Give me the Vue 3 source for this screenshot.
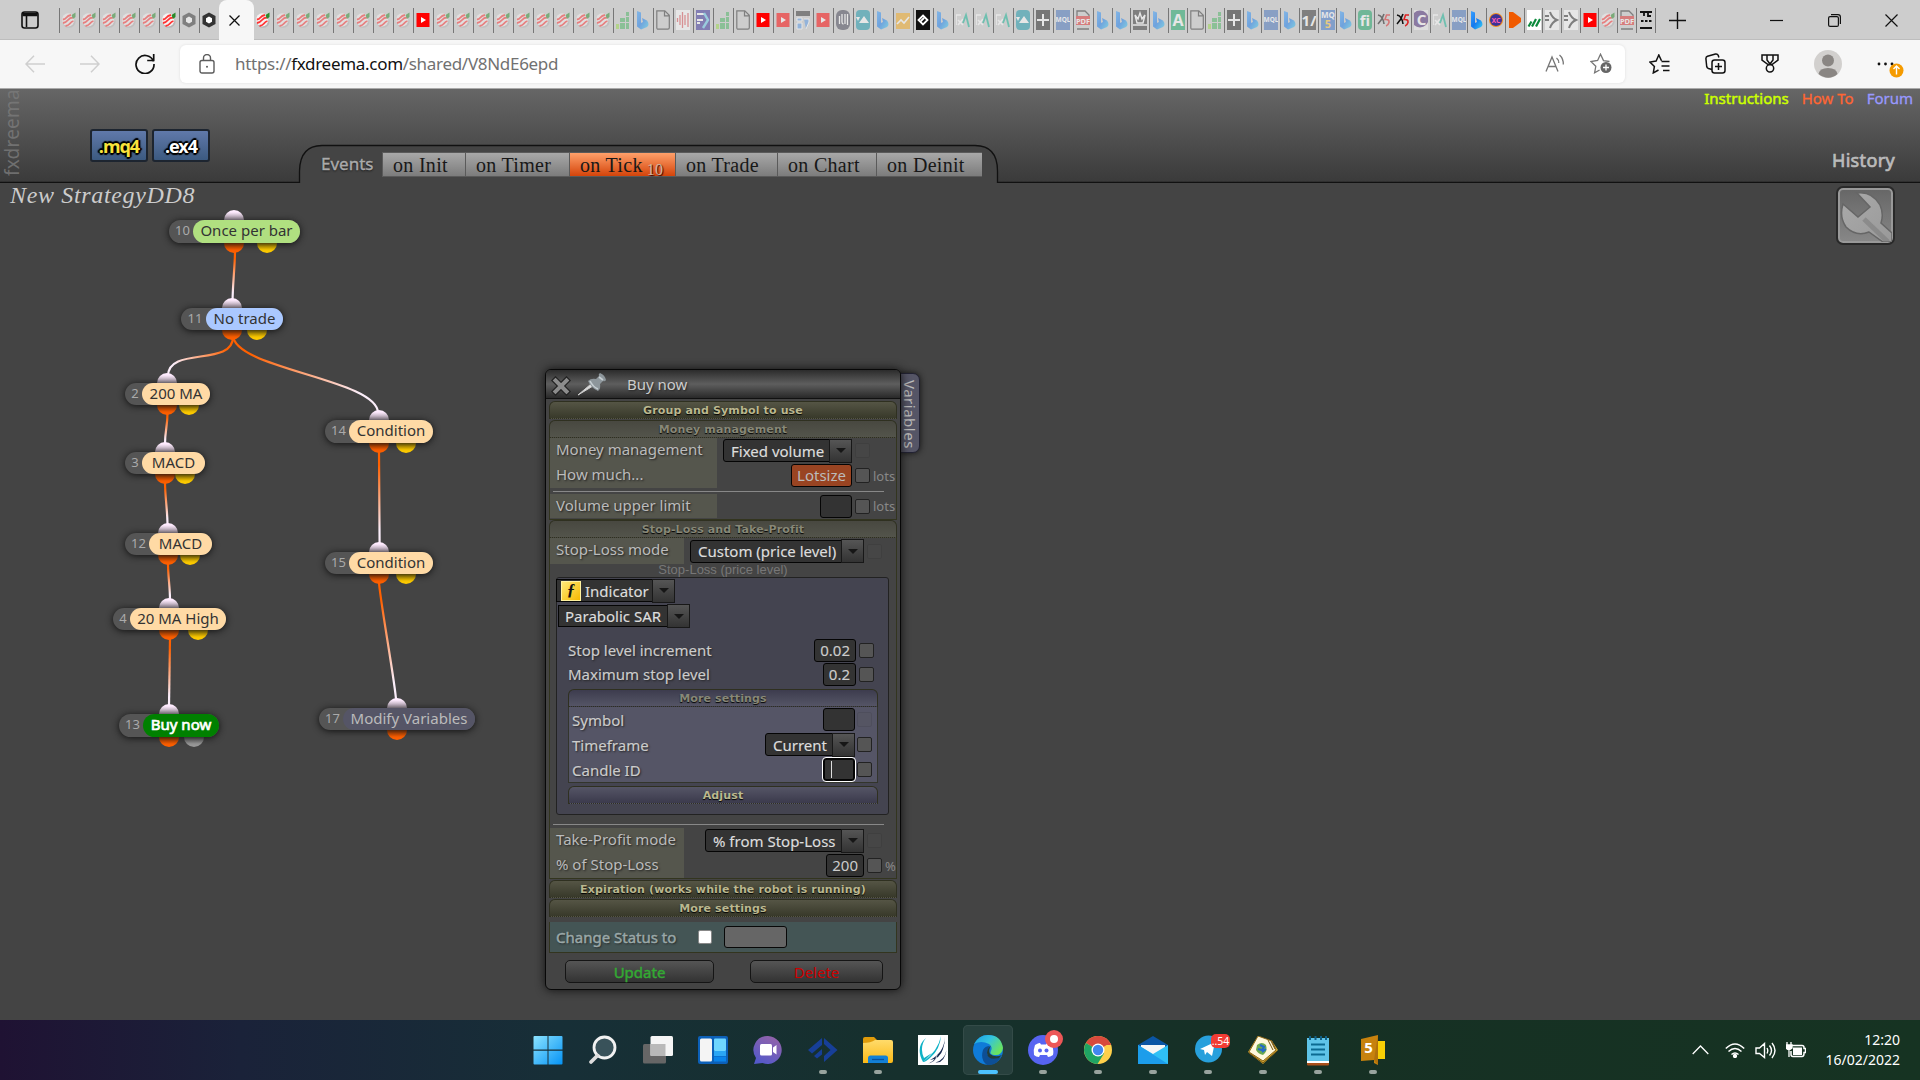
<template>
  <div class="screen">
    <!-- shared favicon shapes -->
    <svg class="defs" width="0" height="0">
      <defs>
        <linearGradient id="bing" x1="0" y1="0" x2="1" y2="1">
          <stop offset="0" stop-color="#3aa0ff" />
          <stop offset="0.5" stop-color="#1479ee" />
          <stop offset="1" stop-color="#38d0f5" />
        </linearGradient>
        <symbol id="i-fx" viewBox="0 0 14 20">
          <ellipse cx="7" cy="11.500" rx="6.600" ry="6.300" fill="#b5b5b5" />
          <ellipse cx="6.200" cy="9.800" rx="6.200" ry="6.600" fill="#f6f2f2" />
          <path d="M.8 9.500Q3 9.500 4.500 7.500T9 5M1 13q3-.5 5-3t5-2.500M3.500 16q3-.5 4.500-2.500T11.500 11" stroke="#f33" stroke-width="1.800" fill="none" />
          <path d="M9.500 5l4-2.500v4.500l-2.500 2z" fill="#2a8a2a" />
        </symbol>
        <symbol id="i-hex" viewBox="0 0 14 20">
          <path d="M7 2.500l6.500 3.500v8L7 17.500.5 14V6z" fill="#333" />
          <path d="M7 6.500l3 1.700v3.600l-3 1.700-3-1.700V8.200z" fill="#fff" />
        </symbol>
        <symbol id="i-yt" viewBox="0 0 14 20">
          <rect x="0.500" y="3" width="13" height="14" fill="#f00" />
          <path d="M5 7l5 3-5 3z" fill="#fff" />
        </symbol>
        <symbol id="i-bars" viewBox="0 0 14 20">
          <path d="M0 14h3v5H0z" fill="#9ad94a" />
          <path d="M4 8h5v4H4zM4 13h5v6H4zM10 2h3v4h-3zM10 7h3v5h-3zM10 13h3v6h-3z" fill="#4bb562" />
        </symbol>
        <symbol id="i-bing" viewBox="0 0 14 20">
          <path d="M1 1l4 1.500v10.500l2-1-1-4 5 2.500q3 4 0 6.500L5 19.500 1 16.500z" fill="url(#bing)" />
        </symbol>
        <symbol id="i-page" viewBox="0 0 14 20">
          <path d="M.8.800h8l4.500 4.500v12.500q0 1.400-1.400 1.400H2.200Q.8 19.200.8 17.800zM8.500.800v5h5" fill="none" stroke="#333" stroke-width="1.200" />
        </symbol>
        <symbol id="i-pulse" viewBox="0 0 14 20">
          <rect width="14" height="20" fill="#fff" />
          <path d="M1.500 8v4M4 5v10M6.500 2v16M9 5v10M12 3v14" stroke="#e0555a" stroke-width="1.300" />
        </symbol>
        <symbol id="i-fxp" viewBox="0 0 14 20">
          <rect width="14" height="20" fill="#3a329a" />
          <path d="M1 4h7M1 10h6M1 13h3" stroke="#fff" stroke-width="2.200" fill="none" />
          <path d="M8 3l4 7-5 8" stroke="#6ce" stroke-width="2.400" fill="none" />
        </symbol>
        <symbol id="i-b7" viewBox="0 0 14 20">
          <path d="M0 1h14v5H0z" fill="#333" />
          <path d="M1 8h5v3H1zM1 13h5v6H1zM8 9h5v3l-3 7" fill="#5a9be8" stroke="#fff" />
        </symbol>
        <symbol id="i-ill" viewBox="0 0 14 20">
          <rect width="14" height="20" rx="6" fill="#445" />
          <path d="M3.500 6v8M6 4v8q0 2 1.500 2M9 4v10M11.500 4v11" stroke="#fff" stroke-width="1.300" fill="none" />
        </symbol>
        <symbol id="i-tri" viewBox="0 0 14 20">
          <rect width="14" height="20" rx="4" fill="#1797ab" />
          <path d="M0 7h4l-2 4zM3 13l5-7 5 7z" fill="#fff" />
        </symbol>
        <symbol id="i-chart" viewBox="0 0 14 20">
          <rect y="3" width="14" height="16" fill="#f3a81c" />
          <path d="M1 14l4-4 3 3 5-6" stroke="#fff" stroke-width="1.600" fill="none" />
        </symbol>
        <symbol id="i-diamond" viewBox="0 0 14 20">
          <rect width="14" height="20" fill="#111" />
          <path d="M7 5.500l4.500 4.500L7 14.500 2.500 10zM5 11l3-3" stroke="#fff" stroke-width="1.800" fill="none" />
        </symbol>
        <symbol id="i-xa" viewBox="0 0 14 20">
          <path d="M0 5h5M0 5v10M2 10l5 5M7 9l-5 6" stroke="#fff" stroke-width="1.600" fill="none" />
          <path d="M7 13l3-8 3 12" stroke="#11b494" stroke-width="1.800" fill="none" />
        </symbol>
        <symbol id="i-plus" viewBox="0 0 14 20">
          <rect width="14" height="20" fill="#222" />
          <path d="M7 4v12M1 10h12" stroke="#fff" stroke-width="2" />
        </symbol>
        <symbol id="i-mql" viewBox="0 0 14 20">
          <rect width="14" height="20" fill="#4573bd" />
          <text x="7" y="11.500" font-size="6.500" text-anchor="middle" font-weight="bold" fill="#fff">MQL</text>
        </symbol>
        <symbol id="i-pdf" viewBox="0 0 14 20">
          <path d="M1 6V1h8l4 4v1M1 19h12" fill="none" stroke="#333" stroke-width="1.300" />
          <rect y="6" width="14" height="9" fill="#e03030" />
          <text x="7" y="13.500" font-size="7.500" text-anchor="middle" font-weight="bold" fill="#fff">PDF</text>
        </symbol>
        <symbol id="i-crown" viewBox="0 0 14 20">
          <rect width="14" height="20" fill="#333" />
          <path d="M2 5l2 8h6l2-8-3 4-2-6-2 6zM0 15h14" stroke="#fff" fill="none" stroke-width="1.400" />
        </symbol>
        <symbol id="i-a" viewBox="0 0 14 20">
          <rect width="14" height="20" fill="#16a765" />
          <text x="7" y="16" font-size="16" text-anchor="middle" font-weight="bold" fill="#fff">A</text>
        </symbol>
        <symbol id="i-one" viewBox="0 0 14 20">
          <rect width="14" height="20" fill="#333" />
          <text x="7" y="16" font-size="15" text-anchor="middle" font-weight="bold" fill="#fff">1/</text>
        </symbol>
        <symbol id="i-mq5" viewBox="0 0 14 20">
          <rect width="14" height="20" fill="#3a73c9" />
          <text x="7" y="8" font-size="8" text-anchor="middle" font-weight="bold" fill="#fff">MQ</text>
          <text x="7" y="18" font-size="11" text-anchor="middle" font-weight="bold" fill="#ffc838">5</text>
        </symbol>
        <symbol id="i-fi" viewBox="0 0 14 20">
          <rect width="14" height="20" rx="4" fill="#15a362" />
          <text x="7" y="15.500" font-size="15" text-anchor="middle" font-weight="bold" fill="#fff">fi</text>
        </symbol>
        <symbol id="i-xf" viewBox="0 0 14 20">
          <path d="M1 5q5 1 6 9M7 4q-2 6-6 10" stroke="#111" stroke-width="1.600" fill="none" />
          <path d="M13 5H9.500L8 9.500q4.500-.5 4 3-1 3-3 3.500" stroke="#d22" stroke-width="1.600" fill="none" />
        </symbol>
        <symbol id="i-c" viewBox="0 0 14 20">
          <rect width="14" height="20" fill="#eee" />
          <circle cx="6" cy="9" r="8.500" fill="#4b2a77" />
          <text x="7.500" y="14.500" font-size="15" text-anchor="middle" font-weight="bold" fill="#fff">C</text>
        </symbol>
        <symbol id="i-xc" viewBox="0 0 14 20">
          <circle cx="7" cy="10" r="7" fill="#f08a1d" />
          <circle cx="7" cy="10" r="6" fill="#3b3297" />
          <text x="7" y="12.500" font-size="7" text-anchor="middle" font-weight="bold" fill="#ff5bb0">XC</text>
        </symbol>
        <symbol id="i-play" viewBox="0 0 14 20">
          <path d="M1 2h4l8 6v4l-8 6H1z" fill="#f05a00" />
        </symbol>
        <symbol id="i-green" viewBox="0 0 14 20">
          <rect width="14" height="20" fill="#fff" />
          <path d="M1.500 16.500l3-5M5 16.500l4-7.500M9 16.500l4-7.500" stroke="#0b8a3c" stroke-width="2.200" />
        </symbol>
        <symbol id="i-fgt" viewBox="0 0 14 20">
          <rect width="14" height="20" fill="#fff" />
          <path d="M5 2q2 6 7 8-5 2-7 8M0 6h4M0 10h4" stroke="#333" stroke-width="2" fill="none" />
        </symbol>
        <symbol id="i-lines" viewBox="0 0 14 20">
          <path d="M1 2h12M5 2v4M9 2v4h3M1 18h12M2 11h2.500M6 11h2.500M10 11h2.500" stroke="#111" stroke-width="1.800" fill="none" />
        </symbol>
      </defs>
    </svg>

    <div class="tabstrip">
      <svg class="tab-menu" width="18" height="18" viewBox="0 0 18 18" fill="none" stroke="#111" stroke-width="1.600">
        <rect x="1" y="1" width="16" height="16" rx="2.500" />
        <path d="M1.500 3.500h15" stroke-width="3.500" />
        <path d="M5.500 5v11" />
      </svg>
      <div v-for="(t, i) in tabsBefore" :key="'b' + i" class="tab before" :class="{ dim: !t.lit }">
        <svg width="14" height="20"><use :href="'#i-' + t.icon" /></svg>
      </div>
      <div class="tab-active">
        <svg width="11" height="11" viewBox="0 0 11 11"><path d="M.5.500l10 10M10.500.500l-10 10" stroke="#111" stroke-width="1.300" /></svg>
      </div>
      <div v-for="(t, i) in tabsAfter" :key="'a' + i" class="tab after" :class="{ dim: !t.lit, narrow: i > 41 }">
        <svg width="14" height="20"><use :href="'#i-' + t.icon" /></svg>
      </div>
      <svg class="new-tab" width="17" height="17" viewBox="0 0 17 17"><path d="M8.500 0v17M0 8.500h17" stroke="#111" stroke-width="1.400" /></svg>
      <div class="win-buttons">
        <svg width="13" height="13" viewBox="0 0 13 13"><path d="M0 6.500h13" stroke="#111" stroke-width="1.200" /></svg>
        <svg width="13" height="13" viewBox="0 0 13 13" fill="none" stroke="#111" stroke-width="1.200"><rect x=".6" y="2.600" width="9.800" height="9.800" rx="1.500" /><path d="M3 .6h7q2.400 0 2.400 2.400v7" /></svg>
        <svg width="13" height="13" viewBox="0 0 13 13"><path d="M.5.500l12 12M12.500.500l-12 12" stroke="#111" stroke-width="1.200" /></svg>
      </div>
    </div>

    <div class="toolbar">
      <svg class="nav-back" width="20" height="18" viewBox="0 0 20 18" fill="none" stroke="#cfcfcf" stroke-width="1.500"><path d="M20 9H1M9 .8L1 9l8 8.200" /></svg>
      <svg class="nav-fwd" width="20" height="18" viewBox="0 0 20 18" fill="none" stroke="#cfcfcf" stroke-width="1.500"><path d="M0 9h19M11 .8L19 9l-8 8.200" /></svg>
      <svg class="nav-reload" width="20" height="21" viewBox="0 0 20 21" fill="none" stroke="#111" stroke-width="1.700"><path d="M18.500 8.500A9 9 0 1 0 19 11M18.700 1v6.500h-6.500" /></svg>
      <div class="address">
        <svg class="lock" width="16" height="20" viewBox="0 0 16 20" fill="none" stroke="#5c5c5c" stroke-width="1.400"><rect x="1" y="6.500" width="14" height="12.500" rx="2" /><path d="M4.500 6.500V4a3.500 3.500 0 0 1 7 0v2.500" /><circle cx="8" cy="12.700" r="1" fill="#5c5c5c" stroke="none" /></svg>
        <span class="url">https://<b>fxdreema.com</b>/shared/V8NdE6epd</span>
        <svg class="read" width="20" height="19" viewBox="0 0 20 19" fill="none" stroke="#767676" stroke-width="1.300"><path d="M1 17.500L7 3l6 14.500M3 12.500h8M11.500 4q2.500 2 2.300 5M14.500 1q4 3.500 3.800 9.500" /></svg>
        <svg width="22" height="21" viewBox="0 0 22 21" fill="none" stroke="#767676" stroke-width="1.300"><path d="M19.500 8.500l-6-.9L10.500 1.200 7.600 7.500l-6.700 1 4.900 4.800-1.200 6.500 5-2.800" /><circle cx="16" cy="14.500" r="5.500" fill="#666" stroke="none" /><path d="M16 11.500v6M13 14.500h6" stroke="#fff" /></svg>
      </div>
      <div class="tools">
        <svg width="21" height="20" viewBox="0 0 21 20" fill="none" stroke="#111" stroke-width="1.500"><path d="M12.500 6.800L9.800 1 7.100 7 .9 8l4.500 4.500-1.100 6.400 5.200-2.900M12.500 7.500h8M12.500 12h8M14 16.500h6.500" /></svg>
        <svg width="21" height="21" viewBox="0 0 21 21" fill="none" stroke="#111" stroke-width="1.500"><rect x="7" y="7" width="13" height="13" rx="2.500" /><path d="M13.500 10v7M10 13.500h7M7 16.500L3.500 15.500Q2 15 1.700 13.500L.9 5.500Q1 3.800 2.500 3.300l8-2.300q2-.3 2.700 1.300l.7 2.200" /></svg>
        <svg width="18" height="19" viewBox="0 0 18 19" fill="none" stroke="#111" stroke-width="1.500"><path d="M1 1h16v5l-6 4.500H7L1 6zM6 1v5l3 4 3-4V1" /><circle cx="9" cy="14.300" r="3.700" /></svg>
        <svg width="28" height="28" viewBox="0 0 28 28"><circle cx="14" cy="14" r="14" fill="#d2d0ce" /><circle cx="14" cy="10.500" r="6" fill="#8a8683" /><path d="M4.500 24q1-6 9.500-6t9.500 6q-9 7.500-19 0" fill="#8a8683" /></svg>
        <svg width="27" height="28" viewBox="0 -2 27 28"><g fill="#111"><circle cx="2" cy="12" r="1.400" /><circle cx="8.500" cy="12" r="1.400" /><circle cx="15" cy="12" r="1.400" /></g><circle cx="19.500" cy="18.500" r="7" fill="#f59b00" /><path d="M19.500 22.500v-8M16.500 17l3-3 3 3" fill="none" stroke="#fff" stroke-width="1.400" /></svg>
      </div>
    </div>

    <header class="page-head">
      <svg class="head-line" width="1920" height="94" viewBox="0 0 1920 94">
        <path d="M300 94V82Q300 56.500 322 56.500H975Q997.500 56.500 997.500 82V94z" fill="#444" />
        <path d="M0 93.500H299.500V82Q300 56.500 322 56.500H975Q997.500 56.500 997.500 82V93.500H1920" fill="none" stroke="#111" stroke-width="1.300" />
      </svg>
      <div class="brand">fxdreema</div>
      <div class="exports">
        <button class="mq4">.mq4</button>
        <button>.ex4</button>
      </div>
      <div class="events">
        <span class="events-label">Events</span>
        <button v-for="e in events" :key="e.name" :class="{ on: e.count }" :style="{ width: e.w + 'px' }">
          {{ e.name }}<sub v-if="e.count">{{ e.count }}</sub>
        </button>
      </div>
      <div class="head-right">
        <nav><a class="lime">Instructions</a><a class="coral">How To</a><a class="lilac">Forum</a></nav>
        <span class="history">History</span>
      </div>
    </header>

    <main class="canvas">
      <h1>New StrategyDD8</h1>
      <div class="wrench">
        <svg width="54" height="54" viewBox="0 0 54 54">
          <defs><linearGradient id="wr" x1="0" y1="0" x2="1" y2="1"><stop offset="0" stop-color="#aaa" /><stop offset="1" stop-color="#999" /></linearGradient></defs>
          <path d="M19 5Q34 3 42 17q4 9 1 18L54 45v9H45L31 44Q18 49 8 39 1 29 5 16L20 29 32 19z" fill="url(#wr)" stroke="#666" stroke-width="1.500" />
          <path d="M26 31L50 54" stroke="#777" stroke-width="5" opacity=".5" />
        </svg>
      </div>

      <svg class="wires" width="520" height="837" viewBox="0 183 520 837" fill="none" stroke-width="2.200">
        <defs>
          <linearGradient v-for="(w, i) in wires" :id="'w' + i" :key="i" gradientUnits="userSpaceOnUse" :x1="w.x1" :y1="w.y1" :x2="w.x2" :y2="w.y2">
            <stop offset="0.150" stop-color="#ff6000" />
            <stop offset="0.850" stop-color="#fbeefa" />
          </linearGradient>
        </defs>
        <path v-for="(w, i) in wires" :key="i" :d="wirePath(w)" :stroke="`url(#w${i})`" />
      </svg>

      <div v-for="n in nodes" :key="n.id" class="node" :style="{ left: n.x + 'px', top: n.y - 183 + 'px', width: n.w + 'px', height: n.h + 'px' }">
        <i class="knob in" :style="{ left: n.k - n.x - 10 + 'px' }"></i>
        <i class="knob out" :style="{ left: n.k - n.x - 10 + 'px' }"></i>
        <i v-if="n.k2" class="knob alt" :class="{ grey: n.kind === 'buy' }" :style="{ left: n.k2 - n.x - 10 + 'px' }"></i>
        <div class="node-body">
          <span class="node-id">{{ n.id }}</span>
          <span class="node-label" :class="n.kind" :style="{ width: n.lw + 'px' }">{{ n.label }}</span>
        </div>
      </div>

      <div class="side-tab">Variables</div>
      <section class="dialog">
        <div class="title">
          <svg width="20" height="20" viewBox="0 0 20 20"><path d="M4.500 4.500l11 11M15.500 4.500l-11 11" stroke="#222" stroke-width="6.500" stroke-linecap="square" /><path d="M4.500 4.500l11 11M15.500 4.500l-11 11" stroke="#8c8c8c" stroke-width="4" stroke-linecap="square" /></svg>
          <svg class="pin" width="30" height="23" viewBox="0 0 30 23"><path d="M1 22L14 11l2 2z" fill="#ddd" stroke="#ccc" /><path d="M11 8q3-3 8-2l3-3q-1-2 1-3 5 2 6 7-1 2-3 1l-3 3q1 5-2 7-7-3-10-10" fill="#8d969b" /><path d="M13 8q3 6 8 8M22 4l4 3" stroke="#c6ced2" stroke-width="1.600" fill="none" /></svg>
          <span>Buy now</span>
        </div>
        <div class="bar gold">Group and Symbol to use</div>
        <div class="bar open">Money management</div>
        <div class="group">
          <div class="row wide"><label>Money management</label><div class="ctl"><span class="select" style="width: 129px"><em>Fixed volume</em><i></i></span><span class="cb off"></span><small></small></div></div>
          <div class="row wide"><label>How much...</label><div class="ctl"><span class="input lot">Lotsize</span><span class="cb"></span><small>lots</small></div></div>
          <hr class="hr1">
          <div class="row wide vol"><label>Volume upper limit</label><div class="ctl"><span class="input blank"></span><span class="cb"></span><small>lots</small></div></div>
        </div>
        <div class="bar open">Stop-Loss and Take-Profit</div>
        <div class="group sl">
          <div class="row sl-row"><label>Stop-Loss mode</label><div class="ctl sh"><span class="select" style="width: 174px"><em>Custom (price level)</em><i></i></span><span class="cb off"></span><small></small></div></div>
          <div class="legend">Stop-Loss (price level)</div>
          <div class="inner">
            <span class="select ind" style="width: 119px"><b class="fn">ƒ</b><em>Indicator</em><i></i></span>
            <span class="select par" style="width: 132px"><em>Parabolic SAR</em><i></i></span>
            <div class="line"><span>Stop level increment</span><div><span class="input">0.02</span><span class="cb"></span></div></div>
            <div class="line"><span>Maximum stop level</span><div><span class="input">0.2</span><span class="cb"></span></div></div>
            <div class="bar violet-open">More settings</div>
            <div class="sub">
              <div class="line"><span>Symbol</span><div><span class="input blank"></span><span class="cb off"></span></div></div>
              <div class="line"><span>Timeframe</span><div><span class="select" style="width: 90px"><em>Current</em><i></i></span><span class="cb"></span></div></div>
              <div class="line"><span>Candle ID</span><div><span class="input blank focus"></span><span class="cb"></span></div></div>
            </div>
            <div class="bar violet">Adjust</div>
          </div>
          <hr class="hr2">
          <div class="row"><label>Take-Profit mode</label><div class="ctl sh"><span class="select" style="width: 159px"><em>% from Stop-Loss</em><i></i></span><span class="cb off"></span><small></small></div></div>
          <div class="row"><label>% of Stop-Loss</label><div class="ctl sh"><span class="input">200</span><span class="cb"></span><small>%</small></div></div>
        </div>
        <div class="bar gold">Expiration (works while the robot is running)</div>
        <div class="bar gold">More settings</div>
        <div class="status"><span>Change Status to</span><i class="check"></i><i class="field"></i></div>
        <div class="actions"><button class="update">Update</button><button class="delete">Delete</button></div>
      </section>
    </main>

    <footer class="taskbar">
      <div class="apps">
        <div v-for="a in apps" :key="a.name" class="app" :class="{ active: a.name === 'edge' }">
          <svg v-if="a.name === 'start'" width="30" height="30" viewBox="0 0 30 30"><defs><linearGradient id="win" x1="0" y1="0" x2="1" y2="1"><stop offset="0" stop-color="#8be3ff" /><stop offset="1" stop-color="#0593f5" /></linearGradient></defs><path d="M0.500 2q0-1 1-1H14.500V14.500H.5zM15.500 1H28.500q1 0 1 1V14.500H15.500zM.5 15.800H14.500V29.500H1.500q-1 0-1-1zM15.500 15.800H29.500V28.500q0 1-1 1H15.500z" fill="url(#win)" /></svg>
          <svg v-else-if="a.name === 'search'" width="30" height="30" viewBox="0 0 30 30"><circle cx="16.500" cy="12.500" r="10.500" fill="#39525a" stroke="#f2f2f2" stroke-width="2.800" /><path d="M9.500 20.500L3 27" stroke="#ddd" stroke-width="3.800" stroke-linecap="round" /></svg>
          <svg v-else-if="a.name === 'view'" width="30" height="30" viewBox="0 0 30 30"><rect y="9" width="23" height="19.500" rx="1.500" fill="#666" /><rect x="7.500" y="1" width="22.500" height="20" rx="1.500" fill="#f5f5f5" /><path d="M7.500 9H22.500V21H7.500z" fill="#b9b9b9" /></svg>
          <svg v-else-if="a.name === 'widgets'" width="30" height="30" viewBox="0 0 30 30"><rect y="1" width="30" height="28" rx="2" fill="#0c60b8" /><rect x="2" y="3.500" width="12" height="23" rx="1.500" fill="#f4f4f4" /><rect x="16" y="3.500" width="12" height="12.500" rx="1" fill="#6fd6ff" /><path d="M16 16h12v5H16z" fill="#2aa6f5" /><path d="M16 21.500h12v5H16z" fill="#0a84ea" /></svg>
          <svg v-else-if="a.name === 'chat'" width="30" height="30" viewBox="0 0 30 30"><defs><linearGradient id="chat" x1="0.800" y1="0" x2="0.300" y2="1"><stop offset="0" stop-color="#9563a8" /><stop offset="1" stop-color="#5459ca" /></linearGradient></defs><path d="M15 1a14 14 0 1 1-5.500 27L1 29l2-6A14 14 0 0 1 15 1z" fill="url(#chat)" /><rect x="7" y="9" width="12" height="11.500" rx="1.500" fill="#fff" /><path d="M20 12.500l3.500-2.500v9.500L20 17z" fill="#fff" /></svg>
          <svg v-else-if="a.name === 'fxd'" width="30" height="26" viewBox="0 0 30 26"><path d="M14 1L0 13l4 3.500L14 8zM14 12L6 19l3 2.500 5-4zM16 1l13.500 12L16 25v-6l6.500-6L16 7z" fill="#173f98" /></svg>
          <svg v-else-if="a.name === 'files'" width="30" height="30" viewBox="0 0 30 30"><path d="M0 4q0-2 2-2h9l3 3v5H0z" fill="#e09b0a" /><defs><linearGradient id="fold" x1="0" y1="0" x2="0" y2="1"><stop offset="0" stop-color="#ffdb6b" /><stop offset="1" stop-color="#fbb916" /></linearGradient></defs><path d="M0 8q8 0 12-3H28q2 0 2 2V26q0 2-2 2H0z" fill="url(#fold)" /><path d="M5 28V23q0-2.500 2.500-2.500H22.500q2.500 0 2.500 2.500v5z" fill="#1380d6" /><path d="M9 24.500H21" stroke="#0a4f9c" stroke-width="1.300" /></svg>
          <svg v-else-if="a.name === 'zt'" width="30" height="30" viewBox="0 0 30 30"><rect width="30" height="30" fill="#fff" /><path d="M8 3Q-3 12 5 27L14 18 6 23Q1 12 8 3M23 1Q20 16 5 27q3 0 8-5Q22 14 23 1" fill="#10b2c6" /><path d="M27 2Q26 18 12 25q10-1 13-11 2-6 2-12M28.500 15q-2 10-11 12.500 9 1 11-12.500M9 28.500q7-1 11-10-2 9-11 10" fill="#17284f" /></svg>
          <svg v-else-if="a.name === 'edge'" width="30" height="30" viewBox="0 0 30 30"><defs><linearGradient id="eg" x1="0" y1="0" x2="1" y2="0.600"><stop offset="0" stop-color="#1b9de2" /><stop offset="0.500" stop-color="#33c3df" /><stop offset="1" stop-color="#6be35c" /></linearGradient></defs><circle cx="15" cy="15" r="15" fill="#0f7bd8" /><path d="M1 9Q6 0 15 0q13 0 15 13-1 8-9 7-5-1-3-4 2-4-2-7Q8 5 1 9z" fill="url(#eg)" /><path d="M10 15q2-4 7-4-7 8 2 12 5 1 9-1-5 9-14 8Q7 25 10 15" fill="#0d4f96" /><path d="M18 11q-3 4-1 8 5 4 12 1l-3 3q-11 3-12-5 0-5 4-7" fill="#233c3a" /></svg>
          <svg v-else-if="a.name === 'discord'" width="36" height="36" viewBox="0 0 36 36"><circle cx="15" cy="21" r="15" fill="#5764f1" /><path d="M7 16q4-2.500 5-2l1 1.500h5L19 14q3 0 5 2 2 6 1 10-3 2-5 2l-1-2h-7l-1 2q-3 0-5-2-1-5 1-10" fill="#fff" /><circle cx="12" cy="21.500" r="2" fill="#5764f1" /><circle cx="18.500" cy="21.500" r="2" fill="#5764f1" /><circle cx="26" cy="10" r="9" fill="#ed5757" /><circle cx="26" cy="10" r="4" fill="#fff" /></svg>
          <svg v-else-if="a.name === 'chrome'" width="28" height="28" viewBox="0 0 28 28"><circle cx="14" cy="14" r="14" fill="#ffd04b" /><path d="M14 14L1.900 7A14 14 0 0 1 26.200 7z" fill="#d84a3d" /><path d="M14 8h12.700" stroke="#d84a3d" stroke-width="2" /><path d="M14 14L1.900 7A14 14 0 0 0 13.500 28L20 17.500z" fill="#1fa463" /><circle cx="14" cy="14" r="6.500" fill="#fff" /><circle cx="14" cy="14" r="5.200" fill="#4287f0" /></svg>
          <svg v-else-if="a.name === 'mail'" width="30" height="28" viewBox="0 0 30 28"><path d="M0 9L15 0 30 9V18H0z" fill="#0b55a4" /><path d="M3 9H27V20H3z" fill="#f5f5f5" /><path d="M0 9L15 18 30 9V28H0z" fill="#2fc0f5" /><path d="M0 9L30 28H0z" fill="#1c9deb" /></svg>
          <svg v-else-if="a.name === 'telegram'" width="35" height="32" viewBox="0 0 35 32"><circle cx="13.500" cy="17" r="13.500" fill="#28a0dc" /><path d="M5 17l15-7-3 14-5-4-2 3-1-5z" fill="#fff" /><rect x="16" y="2" width="19" height="14" rx="5" fill="#f23c34" /><text x="25.500" y="12.800" font-size="10.500" text-anchor="middle" fill="#fff">..54</text></svg>
          <svg v-else-if="a.name === 'book'" width="30" height="28" viewBox="0 0 30 28"><path d="M0 16L15 28 30 14 26 8 10 0z" fill="#d3a934" /><path d="M10 0l14 5 4 9-13 11L1 16z" fill="#fff8dc" stroke="#8a6415" /><path d="M9 9q5-4 9 0 2 6-3 10-5-1-7-5z" fill="#6aa84f" /><path d="M12 9l4 2-2 3-4-1M14 16l4-3" stroke="#2468c8" stroke-width="2" fill="none" /><path d="M20 4l5 10M23 5l4 8M1 17l14 10 14-12" stroke="#76540f" fill="none" /></svg>
          <svg v-else-if="a.name === 'notes'" width="22" height="31" viewBox="0 0 22 31"><rect y="24" width="22" height="6.500" rx="1" fill="#a9501b" /><rect y="3" width="22" height="24" fill="#5fc4e8" /><path d="M0 26h22v2H0z" fill="#fff" /><path d="M4 9.500h14M4 14.500h14M4 19.500h14" stroke="#0c6a91" stroke-width="1.800" /><path d="M3 1v4M8.500 1v4M14 1v4M19 1v4" stroke="#0f5f86" stroke-width="2" /></svg>
          <svg v-else width="24" height="30" viewBox="0 0 24 30"><path d="M8 6h16V24H8z" fill="#f9cf05" /><path d="M0 4L17 0V30L13 28V25L0 26z" fill="#c7820e" /><path d="M13 25l4 5V0" fill="#9a6009" opacity=".5" /><text x="7.500" y="18" font-size="15" font-weight="bold" text-anchor="middle" fill="#fff">5</text></svg>
          <i v-if="a.run" class="run"></i>
        </div>
      </div>
      <div class="tray">
        <svg width="17" height="10" viewBox="0 0 17 10"><path d="M.7 9L8.500 1l7.800 8" fill="none" stroke="#fff" stroke-width="1.300" /></svg>
        <svg class="wifi" width="20" height="15" viewBox="0 0 20 15" fill="none" stroke="#fff" stroke-width="1.500"><path d="M.8 5.500q9.200-9 18.400 0M3.500 8.500q6.500-6 13 0M6.500 11.500q3.500-3 7 0" /><circle cx="10" cy="13" r="1.400" fill="#fff" /></svg>
        <svg class="vol" width="21" height="17" viewBox="0 0 21 17" fill="none" stroke="#fff" stroke-width="1.400"><path d="M1 6h3.500L9.500 1.500v14L4.500 11.500H1zM12 6q1.500 2.500 0 5.500M14.500 3.500q4 5 0 10M17 1q6 7.500 0 15" /></svg>
        <svg class="bat" width="20" height="16" viewBox="0 0 20 16"><path d="M6 3.500h10q2 0 2 2v1h1.500v4H18v1q0 3-2 3H7q-2 0-2-2V9" fill="none" stroke="#fff" stroke-width="1.500" /><rect x="7" y="5.500" width="9" height="7.500" fill="#fff" /><path d="M1 0v3M5 0v3M0 3h6v3q-3 3-6 0zM3 6v9" fill="#fff" stroke="#fff" stroke-width="1.300" /></svg>
        <div class="clock"><span>12:20</span><span>16/02/2022</span></div>
      </div>
    </footer>
  </div>
</template>

<script setup>
// names ending in "!" are tabs that are awake (full opacity)
const toTabs = (s) => s.split(' ').map((n) => ({ icon: n.replace('!', ''), lit: n.endsWith('!') }))

const tabsBefore = toTabs('fx fx fx fx fx fx! hex hex!')
const tabsAfter = toTabs(
  'fx! fx fx fx fx fx fx fx yt! fx fx fx fx fx fx fx fx fx ' +
  'bars bing page pulse fxp bars page yt! yt b7 yt ill tri bing chart diamond! bing xa xa xa tri plus mql pdf ' +
  'bing bing crown bing a page bars plus bing mql bing one mq5 bing fi xf xf! c xa mql bing! xc! play! green! fgt fgt yt! fx pdf lines!'
)

const events = [
  { name: 'on Init', w: 83 },
  { name: 'on Timer', w: 104 },
  { name: 'on Tick', w: 106, count: 10 },
  { name: 'on Trade', w: 102 },
  { name: 'on Chart', w: 99 },
  { name: 'on Deinit', w: 106 }
]

// k / k2: x of the main and the secondary connector
const nodes = [
  { id: 10, label: 'Once per bar', kind: 'green', x: 169, y: 220, w: 131, h: 23, lw: 107, k: 234, k2: 267 },
  { id: 11, label: 'No trade', kind: 'blue', x: 181, y: 308, w: 102, h: 22, lw: 77, k: 232, k2: 257 },
  { id: 2, label: '200 MA', kind: 'peach', x: 125, y: 383, w: 85, h: 22, lw: 68, k: 167, k2: 189 },
  { id: 3, label: 'MACD', kind: 'peach', x: 125, y: 452, w: 80, h: 22, lw: 63, k: 165, k2: 185 },
  { id: 12, label: 'MACD', kind: 'peach', x: 125, y: 533, w: 87, h: 22, lw: 63, k: 168, k2: 190 },
  { id: 4, label: '20 MA High', kind: 'peach', x: 113, y: 608, w: 113, h: 22, lw: 96, k: 169, k2: 198 },
  { id: 13, label: 'Buy now', kind: 'buy', x: 119, y: 714, w: 100, h: 23, lw: 76, k: 169, k2: 194 },
  { id: 14, label: 'Condition', kind: 'peach', x: 325, y: 420, w: 108, h: 23, lw: 84, k: 379, k2: 406 },
  { id: 15, label: 'Condition', kind: 'peach', x: 325, y: 552, w: 108, h: 22, lw: 84, k: 379, k2: 406 },
  { id: 17, label: 'Modify Variables', kind: 'slate', x: 319, y: 708, w: 156, h: 22, lw: 132, k: 397 }
]

const wires = [
  { x1: 235, y1: 251, x2: 232.6, y2: 300 },
  { x1: 233, y1: 337, x2: 168, y2: 376, bend: 30 },
  { x1: 233, y1: 335, x2: 378, y2: 413, bend: 34 },
  { x1: 167.5, y1: 413, x2: 165, y2: 444 },
  { x1: 165, y1: 482, x2: 167.5, y2: 525 },
  { x1: 168, y1: 563, x2: 170, y2: 600 },
  { x1: 170, y1: 638, x2: 169, y2: 706 },
  { x1: 379, y1: 451, x2: 379.6, y2: 544 },
  { x1: 379, y1: 582, x2: 396, y2: 700, bend: 12 }
]

function wirePath(w) {
  const b = w.bend || 14
  return `M${w.x1} ${w.y1}C${w.x1} ${w.y1 + b} ${w.x2} ${w.y2 - b} ${w.x2} ${w.y2}`
}

const apps = [
  { name: 'start' }, { name: 'search' }, { name: 'view' }, { name: 'widgets' }, { name: 'chat' },
  { name: 'fxd', run: true }, { name: 'files', run: true }, { name: 'zt' }, { name: 'edge', run: true },
  { name: 'discord', run: true }, { name: 'chrome', run: true }, { name: 'mail', run: true },
  { name: 'telegram', run: true }, { name: 'book', run: true }, { name: 'notes', run: true }, { name: 'sublime', run: true }
]
</script>

<style>
body { background: #444; overflow: hidden; }
</style>

<style scoped>
* { box-sizing: border-box; }
svg { display: block; flex: none; }
.defs { position: absolute; }
button { font: inherit; padding: 0; cursor: pointer; }

.screen {
  width: 1920px;
  height: 1080px;
  display: flex;
  flex-direction: column;
  overflow: hidden;
  background: #444;
  font-family: "Noto Sans", "Open Sans", sans-serif;
}

/* browser chrome */
.tabstrip { height: 40px; flex: none; display: flex; align-items: center; background: #cdcdcd; box-shadow: inset 0 -1px #bdbdbd; }
.tab-menu { margin: 0 20px 0 21px; }
.tab { width: 20px; height: 25px; flex: none; display: flex; align-items: center; }
.tab.dim svg { opacity: 0.5; }
.tab.before { border-left: 1px solid #777; padding-left: 2px; }
.tab-active {
  width: 35px;
  height: 40px;
  padding-right: 5px;
  flex: none;
  display: flex;
  align-items: center;
  justify-content: center;
  background: #f7f7f7;
  border-radius: 8px 8px 0 0;
}
.tab.after { border-right: 1px solid #777; padding-left: 2px; }
.tab.narrow { width: 18.730px; }
.new-tab { margin-left: 13px; }
.win-buttons { margin-left: auto; display: flex; gap: 44.500px; padding-right: 22px; }

.toolbar { height: 49px; flex: none; display: flex; align-items: center; padding-bottom: 1px; background: #f7f7f7; border-bottom: 1px solid #aaa; }
.nav-back { margin-left: 25px; }
.nav-fwd { margin-left: 35px; }
.nav-reload { margin-left: 35px; }
.address {
  width: 1445px;
  height: 38px;
  margin-left: 25px;
  padding: 0 13px 0 19px;
  display: flex;
  align-items: center;
  background: #fff;
  border-radius: 6px;
  box-shadow: 0 0 3px #ddd;
}
.url { margin: -1px 0 0 20px; font-size: 17px; letter-spacing: -0.300px; color: #717171; white-space: nowrap; }
.url b { font-weight: 400; color: #111; }
.read { margin: 0 25px 0 auto; }
.tools { margin-left: 25px; display: flex; align-items: center; gap: 35px; }
.tools svg { position: relative; left: -1px; }

/* page header */
.page-head { height: 94px; flex: none; display: flex; position: relative; background: linear-gradient(#666, #3a3a3a); }
.head-line { position: absolute; left: 0; top: 0; }
.brand { width: 26px; height: 87px; writing-mode: vertical-rl; transform: rotate(180deg); font-size: 19px; line-height: 24px; color: #7b7b7b; opacity: 0.800; letter-spacing: 0.200px; }
.exports { display: flex; gap: 4px; margin: 40px 0 0 64px; }
.exports button {
  width: 58px;
  height: 33px;
  border: 2px solid #1d2530;
  border-radius: 3px;
  background: linear-gradient(#6079aa, #3c5a80);
  color: #fff;
  font-size: 18px;
  font-weight: 700;
  letter-spacing: -1px;
  line-height: 26px;
  text-shadow: 0 0 3px #000, 2px 0 1px #000, -2px 0 1px #000, 0 2px 1px #000, 0 -2px 1px #000, 1px 1px 1px #000, -1px -1px 1px #000;
}
.exports .mq4 { color: #f9e33c; }
.events { display: flex; align-items: center; height: 25px; margin: 63px 0 0 111px; position: relative; }
.events-label { width: 61px; margin-top: -2px; font-size: 17px; color: #aaa; text-shadow: 0 1px 2px #111; -webkit-text-stroke: 0.400px; }
.events button {
  height: 25px;
  padding-left: 10px;
  border: 1px solid #5a5a5a;
  border-right-width: 0;
  background: linear-gradient(#a8a8a8, #7c7c7c);
  font-family: "Liberation Serif", serif;
  font-size: 20px;
  line-height: 20px;
  color: #181818;
  letter-spacing: 0.300px;
  text-align: left;
  white-space: nowrap;
}
.events button.on { background: linear-gradient(#ffa06a, #d4440a); }
.events sub { margin-left: 4px; font-size: 16px; vertical-align: -3px; line-height: 0; color: #ccb5a2; text-shadow: 1px 1px 1px #300; }
.head-right { position: relative; margin-left: auto; padding-right: 7px; display: flex; flex-direction: column; align-items: flex-end; }
.head-right nav { display: flex; gap: 13px; margin-top: -1px; font-size: 15px; line-height: 20px; }
.lime { color: #cf0; -webkit-text-stroke: 0.500px; }
.coral { color: #f63; -webkit-text-stroke: 0.300px; }
.lilac { color: #99f; -webkit-text-stroke: 0.300px; }
.history { margin: 41px 18px 0 0; font-size: 18px; line-height: 22px; letter-spacing: 0.350px; color: #bbb; -webkit-text-stroke: 0.700px; }

/* canvas */
.canvas { position: relative; flex: 1; background: #444; }
h1 { margin: 0; padding-left: 10px; font: italic 24px/24px "Liberation Serif", serif; letter-spacing: 0.650px; color: #ccc; }
.wrench { position: absolute; left: 1836px; top: 3px; width: 59px; height: 59px; overflow: hidden; border: 2px solid #292929; border-radius: 7px; background: linear-gradient(#666, #888); box-shadow: inset 0 0 0 2px #999; }
.wires { position: absolute; left: 0; top: 0; }
.node { position: absolute; }
.node-body { position: relative; height: 100%; display: flex; justify-content: space-between; border-radius: 12px; background: #555; box-shadow: 0 1px 7px #111; }
.node-id { flex: 1; text-align: center; padding-left: 3px; font-size: 13px; line-height: 21px; color: #aaa; }
.node-label { height: 100%; border-radius: 12px; text-align: center; font-size: 15px; line-height: 20px; color: #333; white-space: nowrap; }
.node-label.green { background: #b0e080; }
.node-label.blue { background: #aac8ff; }
.node-label.peach { background: #ffdaa5; }
.node-label.buy { background: #008000; color: #fff; -webkit-text-stroke: 0.700px; }
.node-label.slate { background: #556; color: #bbb; }
.knob { position: absolute; width: 20px; height: 10px; }
.knob.in { top: -10px; border-radius: 10px 10px 0 0; background: linear-gradient(#ffecff 20%, #a598a5); }
.knob.out { bottom: -10px; border-radius: 0 0 10px 10px; background: linear-gradient(#b94600, #ff6000 70%); }
.knob.alt { bottom: -10px; border-radius: 0 0 10px 10px; background: linear-gradient(#b99500, #ffcc00 70%); }
.knob.grey { background: linear-gradient(#6a6a6a, #999 70%); }

/* settings window */
.side-tab { position: absolute; left: 897px; top: 190px; width: 23px; height: 80px; padding-top: 6px; writing-mode: vertical-rl; border: 1px solid #223; border-radius: 0 7px 7px 0; background: #556; color: #bbb; font-size: 15px; line-height: 18px; letter-spacing: 0.500px; box-shadow: 0 0 6px #111; }
.dialog {
  position: absolute;
  left: 545px;
  top: 186px;
  width: 356px;
  height: 621px;
  padding: 0 3px;
  border: 1px solid #080808;
  border-radius: 6px;
  background: #444;
  box-shadow: 0 0 10px #111;
  font-size: 15px;
  color: #bbb;
  text-shadow: 1px 1px 2px #222;
}
.title { display: flex; align-items: center; height: 29px; margin: 0 -3px 2px; border-bottom: 1px solid #111; border-radius: 5px 5px 0 0; background: linear-gradient(#2c2c2c, #5e5e5e 50%, #292929); }
.title svg:first-child { margin: 3px 0 0 5px; }
.title .pin { margin-left: 6px; }
.title span { margin-left: 20px; color: #ccc; }
.bar {
  height: 18px;
  margin-bottom: 1px;
  border: 1px solid #2f3020;
  border-bottom-style: dotted;
  border-radius: 6px 6px 0 0;
  text-align: center;
  font: bold 11px/17px "DejaVu Sans", sans-serif;
  letter-spacing: 0.140px;
  text-shadow: 0 1px 1px #000;
}
.gold { background: linear-gradient(#555545, #38392a); color: #bbb890; }
.open { margin-bottom: 0; background: linear-gradient(#484840, #53544b); color: #888878; }
.group { height: 82px; border: 1px solid #33351f; border-top: 0; }
.group.sl { height: 341px; margin-bottom: 1px; }
.row { height: 25px; display: flex; justify-content: space-between; }
.row label { width: 134px; padding-left: 6px; background: #55564d; line-height: 23px; white-space: nowrap; }
.row.wide label { width: 167px; }
.row.vol { height: 24px; }
.row.vol label { line-height: 22px; }
.row.sl-row { height: 26px; }
hr { border: 0; height: 1px; background: #888; }
.hr1 { margin: 3px 12px 2px 3px; }
.ctl { display: flex; align-items: center; gap: 3px; }
small { width: 23px; font-size: 13px; color: #888; text-shadow: none; }
.ctl.sh small { width: 11px; }
.cb { width: 15px; height: 15px; flex: none; border: 1px solid #222; border-radius: 2px; background: #555; }
.cb.off { opacity: 0.130; }
.input { height: 23px; padding: 0 5px; border: 1px solid #050505; border-radius: 3px; background: #333; color: #ccc; line-height: 21px; text-shadow: none; }
.input.blank { width: 32px; }
.input.lot { background: #994422; color: #bbb; }
.input.focus { outline: 1.500px solid #fff; border-width: 2px; position: relative; }
.input.focus::before { content: ""; display: block; width: 1px; height: 17px; margin: 1px 0 0 1px; background: #ddd; }
.select { height: 23px; display: flex; align-items: center; border: 1px solid #050505; border-radius: 3px; background: #333; color: #ddd; text-shadow: none; white-space: nowrap; }
.select em { font-style: normal; padding-left: 7px; line-height: 20px; -webkit-text-stroke: 0.150px; }
.select i { width: 23px; height: 24px; margin: -1px -1px -1px auto; flex: none; display: flex; align-items: center; justify-content: center; border: 1px solid #181818; background: linear-gradient(#555, #333); }
.select i::before { content: ""; border: 5px solid transparent; border-top: 5px solid #161616; border-bottom: 0; }
.legend { height: 13px; text-align: center; font: 13px/11px "Liberation Sans", sans-serif; color: #777; text-shadow: none; }
.inner { height: 238px; margin: 0 7px 0 6px; border: 1px solid #222; border-radius: 3px; background: #444450; color: #ccc; }
.ind { margin: 1px 0 0 -1px; }
.par { margin: 3px 0 11px 1px; height: 22px; }
.par em { padding-left: 6px; }
.select.ind, .select.par { border-radius: 0; }
.fn { width: 20px; height: 20px; margin-left: 4px; border: 1px solid #fff2a0; background: linear-gradient(135deg, #ffe878, #f5b900); color: #111; font: italic bold 17px/16px "Liberation Serif", serif; text-align: center; }
.fn + em { padding-left: 4px; }
.line { height: 24px; display: flex; align-items: center; justify-content: space-between; padding: 0 14px 0 11px; line-height: 22px; -webkit-text-stroke: 0.150px; }
.line > div { display: flex; align-items: center; gap: 3px; }
.violet, .violet-open { width: 310px; margin: 3px 0 0 11px; color: #bbb890; background: linear-gradient(#555566, #3b3a4c); }
.violet-open { margin-top: 3px; color: #888878; background: linear-gradient(#3d3c4e, #555566); }
.sub { width: 310px; height: 76px; margin-left: 11px; border: 1px solid #33352c; border-top: 0; background: #555566; }
.sub .line { height: 25px; padding: 0 5px 0 3px; }
.sub .line > div { gap: 2px; }
.hr2 { margin: 9px 12px 3px 3px; }
.status { display: flex; align-items: center; height: 31px; margin-top: 5px; padding-left: 6px; border: 1px solid #33351f; border-top: 0; background: #445555; color: #9aa8a8; -webkit-text-stroke: 0.450px; }
.status span { width: 142px; line-height: 24px; }
.check { width: 14px; height: 14px; border: 1px solid #888; border-radius: 2px; background: #fff; }
.field { width: 63px; height: 22px; margin-left: 12px; border: 1px solid #080808; border-radius: 3px; background: #666; }
.actions { display: flex; justify-content: space-between; padding: 7px 14px 0 16px; }
.actions button { height: 23px; border: 1px solid #151515; border-radius: 5px; background: linear-gradient(#555, #333); line-height: 20px; }
.update { width: 149px; color: #3a3; -webkit-text-stroke: 0.450px; }
.delete { width: 133px; color: #c00; }

/* taskbar */
.taskbar { height: 60px; flex: none; display: flex; justify-content: space-between; background: linear-gradient(90deg, #1f1233 0, #1a2239 240px, #172f37 560px, #16302d 900px, #163024 1300px, #163322); }
.apps { display: flex; gap: 5.040px; padding: 5px 0 0 523px; }
.app { position: relative; width: 50px; height: 50px; display: flex; align-items: center; justify-content: center; border-radius: 5px; }
.app.active { background: #27403d; box-shadow: inset 0 0 0 1px #344b48; }
.app:nth-child(10) svg { margin: -7px -6px 0 0; }
.app:nth-child(13) svg { margin: -5px -8px 0 0; }
.run { position: absolute; left: 21px; bottom: 1px; width: 8px; height: 4px; border-radius: 2px; background: #98a39e; }
.active .run { left: 15px; width: 20px; background: #4cc2ff; }
.tray { display: flex; align-items: center; padding-right: 20px; }
.wifi { margin-left: 16px; }
.tray .vol { margin-left: 10px; }
.bat { margin-left: 10px; }
.clock { width: 94px; margin-top: -1px; display: flex; flex-direction: column; align-items: flex-end; font-size: 14px; line-height: 20px; color: #fff; letter-spacing: 0; }
</style>
